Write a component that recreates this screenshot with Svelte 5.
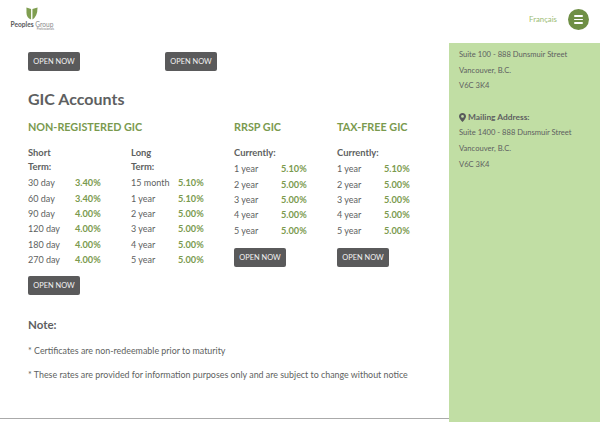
<script>
  const shortTerm = [
    ["30 day", "3.40%"],
    ["60 day", "3.40%"],
    ["90 day", "4.00%"],
    ["120 day", "4.00%"],
    ["180 day", "4.00%"],
    ["270 day", "4.00%"]
  ];
  const longTerm = [
    ["15 month", "5.10%"],
    ["1 year", "5.10%"],
    ["2 year", "5.00%"],
    ["3 year", "5.00%"],
    ["4 year", "5.00%"],
    ["5 year", "5.00%"]
  ];
  const current = [
    ["1 year", "5.10%"],
    ["2 year", "5.00%"],
    ["3 year", "5.00%"],
    ["4 year", "5.00%"],
    ["5 year", "5.00%"]
  ];
</script>

{#snippet rates(rows)}
  {#each rows as row}
    <div class="rate-row">
      <span class="term">{row[0]}</span>
      <strong class="rate">{row[1]}</strong>
    </div>
  {/each}
{/snippet}

<div class="page">
  <header>
    <div class="logo">
      <svg width="12" height="13" viewBox="0 0 13 14">
        <path d="M0.5 0.5 L5.5 2 L5.5 13.5 Q0.5 12 0.5 6 Z" fill="#7f9e50" />
        <path d="M7 2 L12.5 0.5 Q12.5 10 7 13.5 Z" fill="#7f9e50" />
      </svg>
      <div class="logo-name"><b>Peoples</b> Group</div>
      <div class="logo-sub">Professionals</div>
    </div>
    <div class="head-right">
      <a class="lang" href="#top">Français</a>
      <button class="menu" aria-label="Menu">
        <span></span><span></span><span></span>
      </button>
    </div>
  </header>

  <div class="body">
    <main>
      <div class="top-buttons">
        <button class="open">OPEN NOW</button>
        <button class="open">OPEN NOW</button>
      </div>

      <h1>GIC Accounts</h1>

      <div class="accounts">
        <section class="wide">
          <h2>NON-REGISTERED GIC</h2>
          <div class="pair">
            <div>
              <h3>Short<br />Term:</h3>
              {@render rates(shortTerm)}
            </div>
            <div>
              <h3>Long<br />Term:</h3>
              {@render rates(longTerm)}
            </div>
          </div>
          <button class="open">OPEN NOW</button>
        </section>
        <section>
          <h2>RRSP GIC</h2>
          <h3>Currently:</h3>
          {@render rates(current)}
          <button class="open">OPEN NOW</button>
        </section>
        <section>
          <h2>TAX-FREE GIC</h2>
          <h3>Currently:</h3>
          {@render rates(current)}
          <button class="open">OPEN NOW</button>
        </section>
      </div>

      <h4>Note:</h4>
      <p>* Certificates are non-redeemable prior to maturity</p>
      <p>* These rates are provided for information purposes only and are subject to change without notice</p>
    </main>

    <aside>
      <div class="line">Suite 100 - 888 Dunsmuir Street</div>
      <div class="line">Vancouver, B.C.</div>
      <div class="line">V6C 3K4</div>
      <div class="line mail">
        <svg width="7" height="9" viewBox="0 0 7 9">
          <path fill-rule="evenodd" d="M3.5 0 C1.5 0 0 1.5 0 3.4 C0 5.4 2.4 7.6 3.5 9 C4.6 7.6 7 5.4 7 3.4 C7 1.5 5.5 0 3.5 0 Z M3.5 2 A1.4 1.4 0 1 1 3.5 4.8 A1.4 1.4 0 1 1 3.5 2 Z" fill="#58595b" />
        </svg>
        <strong>Mailing Address:</strong>
      </div>
      <div class="line">Suite 1400 - 888 Dunsmuir Street</div>
      <div class="line">Vancouver, B.C.</div>
      <div class="line">V6C 3K4</div>
    </aside>
  </div>
</div>

<style>
  :global(body) {
    margin: 0;
    background: #fff;
  }

  .page {
    width: 600px;
    height: 422px;
    overflow: hidden;
    font-family: Lato, "Open Sans", "Liberation Sans", sans-serif;
    color: #5e5f61;
  }

  header {
    height: 43px;
    display: flex;
    justify-content: space-between;
    box-sizing: border-box;
    padding: 7px 11px 0 10px;
  }

  .logo {
    width: 44px;
    text-align: center;
    line-height: 1;
  }

  .logo svg {
    display: block;
    margin: 0 auto;
  }

  .logo-name {
    font-size: 6.6px;
    margin-top: 1px;
    color: #8a8b8d;
    white-space: nowrap;
  }

  .logo-name b {
    font-weight: 700;
    color: #58595b;
  }

  .logo-sub {
    font-size: 3px;
    text-align: right;
    color: #77787a;
  }

  .head-right {
    display: flex;
    align-items: flex-start;
    gap: 11px;
  }

  .lang {
    font-size: 7.8px;
    margin-top: 7px;
    color: #9cbc74;
    text-decoration: none;
  }

  .menu {
    width: 21px;
    height: 21px;
    margin-top: 2px;
    padding: 0;
    border: 0;
    border-radius: 50%;
    background: #6f8f45;
    display: flex;
    flex-direction: column;
    align-items: center;
    justify-content: center;
    gap: 2px;
  }

  .menu span {
    width: 9px;
    height: 1.6px;
    background: #fff;
    border-radius: 1px;
  }

  .body {
    display: flex;
    height: 379px;
  }

  main {
    width: 449px;
    height: 376px;
    box-sizing: border-box;
    padding: 9px 0 0 28px;
    border-bottom: 1px solid #aaa;
  }

  .top-buttons {
    display: flex;
    gap: 85px;
  }

  .open {
    display: block;
    width: 52px;
    height: 19px;
    padding: 0;
    border: 0;
    border-radius: 2px;
    background: #5a5a5b;
    color: #f4f4f4;
    font-family: inherit;
    font-size: 7.4px;
    white-space: nowrap;
  }

  h1 {
    margin: 17px 0 0;
    font-size: 16px;
    line-height: 22px;
    font-weight: 700;
  }

  .accounts {
    display: flex;
    margin-top: 9px;
  }

  section {
    width: 103px;
  }

  section.wide {
    width: 206px;
  }

  .pair {
    display: flex;
  }

  .pair > div {
    width: 103px;
  }

  h2 {
    margin: 0 0 11px;
    font-size: 10.8px;
    line-height: 16px;
    font-weight: 700;
    color: #7a9a4e;
    white-space: nowrap;
  }

  h3 {
    margin: 0 0 1px;
    font-size: 9.4px;
    line-height: 14px;
    font-weight: 700;
  }

  .rate-row {
    display: flex;
    height: 15.35px;
    align-items: center;
    font-size: 9px;
  }

  .term {
    width: 47px;
    white-space: nowrap;
  }

  .rate {
    font-size: 9.2px;
    font-weight: 700;
    color: #7a9a4e;
  }

  section .open {
    margin-top: 10px;
  }

  section.wide .open {
    margin-top: 9px;
  }

  h4 {
    margin: 22px 0 0;
    font-size: 11.5px;
    line-height: 16px;
    font-weight: 700;
  }

  p {
    margin: 11px 0 0;
    font-size: 8.9px;
    line-height: 13px;
    white-space: nowrap;
  }

  aside {
    width: 151px;
    background: #c1dea4;
    box-sizing: border-box;
    padding: 4px 0 0 10px;
  }

  .line {
    font-size: 7.6px;
    line-height: 15.6px;
    white-space: nowrap;
  }

  .mail {
    margin-top: 16px;
    display: flex;
    align-items: center;
    gap: 2px;
  }

  .mail strong {
    font-size: 8.4px;
    font-weight: 700;
  }
</style>
